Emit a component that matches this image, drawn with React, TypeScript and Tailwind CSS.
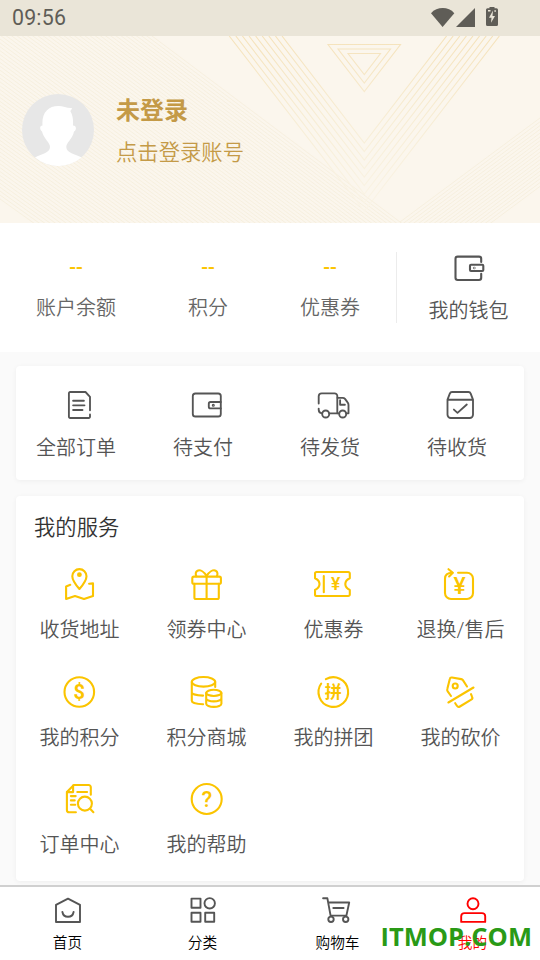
import React from 'react';

const FONT = "font-['Roboto','Noto_Sans_CJK_SC',sans-serif]";

interface IconProps {
  children: React.ReactNode;
  className?: string;
  strokeWidth?: number;
}

/** 40x40 stroked icon, coloured through currentColor */
const Icon: React.FC<IconProps> = ({ children, className = '', strokeWidth = 2.1 }) => (
  <svg
    width="40"
    height="40"
    viewBox="0.5 0 40 40"
    fill="none"
    stroke="currentColor"
    strokeWidth={strokeWidth}
    strokeLinecap="round"
    strokeLinejoin="round"
    className={`block shrink-0 ${className}`}
  >
    {children}
  </svg>
);

interface IconTextProps {
  y: number;
  size: number;
  x?: number;
  weight?: number;
  children: string;
}

/** Character placed inside an icon */
const IconText: React.FC<IconTextProps> = ({ x = 20, y, size, weight = 700, children }) => (
  <text
    x={x}
    y={y}
    fontSize={size}
    fontWeight={weight}
    textAnchor="middle"
    fill="currentColor"
    stroke="none"
  >
    {children}
  </text>
);

interface Entry {
  label: string;
  icon: React.ReactNode;
}

const orders: Entry[] = [
  {
    label: '全部订单',
    icon: (
      <>
        <path d="M30.5 25.3V11.8L26 7H10.6a1.2 1.2 0 0 0-1.2 1.2v23.6a1.2 1.2 0 0 0 1.2 1.2h18.7a1.2 1.2 0 0 0 1.2-1.2v-2.3" />
        <path d="M13.6 15.7h10.8M13.6 20.3h11.4M13.6 25h9.4" />
      </>
    ),
  },
  {
    label: '待支付',
    icon: (
      <>
        <rect x="6.3" y="8.5" width="28" height="23" rx="2.6" />
        <path d="M34.3 17H24a1.7 1.7 0 0 0-1.7 1.7v3A1.7 1.7 0 0 0 24 23.4h10.3" />
        <circle cx="26.8" cy="20.2" r="0.6" />
      </>
    ),
  },
  {
    label: '待发货',
    icon: (
      <>
        <path d="M5.2 18.5v-7.2a3 3 0 0 1 3-3h12.9a2.7 2.7 0 0 1 2.7 2.7v17.2" />
        <path d="M5.2 23.6v1.2a3.5 3.5 0 0 0 3.3 3.5M15.8 28.3h9.8" />
        <path d="M24 12.8h5.2a3 3 0 0 1 2.3 1.1l2.6 3.5a4 4 0 0 1 .9 2.6v8.3h-2.2" />
        <path d="M26.6 15.2v4.5h4.8" />
        <circle cx="12.2" cy="29" r="3.5" />
        <circle cx="29.2" cy="29" r="3.5" />
      </>
    ),
  },
  {
    label: '待收货',
    icon: (
      <>
        <path d="M7 14.7 9.3 8.6A2.4 2.4 0 0 1 11.6 7h16.3a2.4 2.4 0 0 1 2.3 1.6l2.3 6.1v15a3.3 3.3 0 0 1-3.3 3.3h-18.9A3.3 3.3 0 0 1 7 29.7zH32.5" />
        <path d="m13.4 24.6 3.6 3.3 9.3-8.4" />
      </>
    ),
  },
];

const services: Entry[] = [
  {
    label: '收货地址',
    icon: (
      <>
        <path d="M19.9 25C16 20.5 12.8 16.5 12.8 12.2a7.1 7.1 0 0 1 14.2 0C27 16.5 23.8 20.5 19.9 25z" />
        <circle cx="19.9" cy="10.7" r="2.4" fill="currentColor" stroke="none" />
        <path d="m10.8 20.8-4.2 1.7V35l8.9-3 9 3 9-3V19.4l-3.9.3" />
      </>
    ),
  },
  {
    label: '领券中心',
    icon: (
      <>
        <rect x="5.8" y="12.6" width="28.6" height="7.2" rx="1.6" />
        <path d="M7.9 19.8v13.6A1.6 1.6 0 0 0 9.5 35h21.2a1.6 1.6 0 0 0 1.6-1.6V19.8M20.1 12.6V35" />
        <path d="M20.1 12C17.6 8 13.8 5.5 11 6.7c-2.2 1-2 3.8-1.2 5.5M20.1 12c2.5-4 6.3-6.5 9.1-5.3 2.2 1 2 3.8 1.2 5.5" />
      </>
    ),
  },
  {
    label: '优惠券',
    icon: (
      <>
        <path d="M3 8h31.8a1.5 1.5 0 0 1 1.5 1.5v4.7c-3.2 1.4-4.5 3.6-4.5 5.9s1.3 4.5 4.5 5.9v4.5a1.5 1.5 0 0 1-1.5 1.5H3a1.5 1.5 0 0 1-1.5-1.5V26C4.7 24.6 6 22.4 6 20.1s-1.3-4.5-4.5-5.9V9.5A1.5 1.5 0 0 1 3 8z" />
        <path d="M10.300 12v16.300" />
        <IconText x={22.2} y={26} size={17.5} weight={600}>¥</IconText>
      </>
    ),
  },
  {
    label: '退换/售后',
    icon: (
      <>
        <path d="M17.600 8.700h8.900a6 6 0 0 1 6 6V29a6 6 0 0 1-6 6h-16a6 6 0 0 1-6-6V14.700c0-3.600 2.700-6 7.500-6" />
        <path d="m8 5.200 4.300 3.600-3.700 3.700" />
        <IconText x={19.2} y={29.8} size={23} weight={500}>¥</IconText>
      </>
    ),
  },
  {
    label: '我的积分',
    icon: (
      <>
        <circle cx="19.800" cy="20" r="14.800" />
        <IconText x={19.8} y={27} size={20}>$</IconText>
      </>
    ),
  },
  {
    label: '积分商城',
    icon: (
      <>
        <ellipse cx="17" cy="9.800" rx="11.700" ry="4.800" />
        <path d="M5.300 10v18.800c0 1.800 4.700 3.300 11.300 3.400M5.300 20.200c0 1.800 4.700 3.300 11.300 3.400M28.700 10v5" />
        <ellipse cx="27.300" cy="20.900" rx="7.600" ry="3.100" />
        <path d="M19.700 21v10.700c0 1.800 3.400 3.200 7.600 3.200s7.600-1.400 7.600-3.200V21M19.700 26.200c0 1.800 3.400 3.200 7.600 3.200s7.600-1.400 7.600-3.200" />
      </>
    ),
  },
  {
    label: '我的拼团',
    icon: (
      <>
        <path d="M12.400 7.200a14.800 14.800 0 1 1-4.700 4.300" />
        <IconText x={19.8} y={26.4} size={17}>拼</IconText>
      </>
    ),
  },
  {
    label: '我的砍价',
    icon: (
      <>
        <path d="m10.500 24-3.300-4.700a2.500 2.500 0 0 1-.4-2.200L9.300 7a1.900 1.900 0 0 1 2.200-1.500l9.200 1.600a2.500 2.500 0 0 1 1.700 1.100l4.100 6.300" />
        <circle cx="14.700" cy="14" r="2.500" />
        <path d="M33 15.500 7.900 30.500" />
        <path d="m14.700 31.200 1.700 2.600a2.200 2.200 0 0 0 3 .7l11.300-6.800a2.200 2.200 0 0 0 .8-3l-1-2.500" />
      </>
    ),
  },
  {
    label: '订单中心',
    icon: (
      <>
        <path d="M31.300 15.800V8.200A2.200 2.200 0 0 0 29.100 6H14.300L7.400 13v18a2.300 2.300 0 0 0 2.300 2.300h6.700" />
        <path d="M13.600 6.600v6.500H7.600M17.800 13h9.800M11.400 17.100h4.800M11.400 21.400h3.800M11.400 25.700h4.400" />
        <circle cx="25.400" cy="24.600" r="7" />
        <path d="m30.600 29.800 3.300 3.400" />
      </>
    ),
  },
  {
    label: '我的帮助',
    icon: (
      <>
        <circle cx="20.200" cy="20" r="15" />
        <IconText x={20.4} y={27.8} size={22} weight={500}>?</IconText>
      </>
    ),
  },
];

const tabs: Entry[] = [
  {
    label: '首页',
    icon: (
      <>
        <path d="M8.500 14.900 20.500 8.600l12 6.300V32h-24z" />
        <path d="M14.900 22c.5 2.900 2.800 4.800 5.600 4.800s5.100-1.900 5.600-4.800" />
      </>
    ),
  },
  {
    label: '分类',
    icon: (
      <>
        <rect x="9" y="8.600" width="9" height="9.200" />
        <circle cx="27.200" cy="13.300" r="5.200" />
        <rect x="9" y="22.800" width="9" height="9" />
        <rect x="22.700" y="22.800" width="9" height="9" />
      </>
    ),
  },
  {
    label: '购物车',
    icon: (
      <>
        <path d="M5.600 8.300h4.300l3.200 17.300h15.800l2.800-13.100h-21M15.800 18h10.300" />
        <circle cx="13.500" cy="29.300" r="2.700" />
        <circle cx="28.200" cy="29.300" r="2.700" />
      </>
    ),
  },
  {
    label: '我的',
    icon: (
      <>
        <circle cx="20.500" cy="13.700" r="5.500" />
        <path d="M8.700 31.900v-5.600a3.200 3.200 0 0 1 3.200-3.200h17.600a3.200 3.200 0 0 1 3.200 3.200v5.600z" />
      </>
    ),
  },
];

const stats = ['账户余额', '积分', '优惠券'];

const StatusBar = () => (
  <div className="flex h-9 items-center bg-[#eae5d8] pl-3 pr-[40px] text-[#5f5d57]">
    <span className="text-[21.33px] font-normal leading-9 tracking-[0.2px]">09:56</span>
    <svg className="ml-auto" width="70" height="36" viewBox="430 0 70 36" fill="currentColor">
      <path d="M431 13.200C437 6.400 448.500 6.400 454.300 13.200L442.600 27z" />
      <path d="M475 8v19h-19z" />
      <path d="M489.500 7h5v1.200h2a1.500 1.500 0 0 1 1.500 1.500v14.800a1.500 1.500 0 0 1-1.500 1.500h-9a1.500 1.500 0 0 1-1.500-1.500V9.700a1.500 1.500 0 0 1 1.500-1.500h2z" />
      <path d="M493 10.500 489 17.700h2.500l-.5 5 4-6.700h-2.500z" fill="#eae5d8" />
      <path d="M488 10h2.500v1.500H488zM494.500 10h1.200v2h-1.200z" fill="#eae5d8" />
    </svg>
  </div>
);

/** Gold line pattern behind the profile block */
const HeaderPattern = () => (
  <svg className="absolute inset-0" width="540" height="187" viewBox="0 36 540 187" fill="none">
    <defs>
      <linearGradient id="fade" x1="0" y1="36" x2="0" y2="223" gradientUnits="userSpaceOnUse">
        <stop offset="0" stopColor="#f5e2ba" />
        <stop offset="0.450" stopColor="#f7edd5" />
        <stop offset="1" stopColor="#faf5ea" />
      </linearGradient>
    </defs>
    <g stroke="#f5eedb" strokeWidth="0.800">
      {Array.from({ length: 72 }, (_, i) => (
        <path key={i} d={`M0 ${-78 + i * 3.9}L420 ${237 + i * 3.7}`} />
      ))}
      {Array.from({ length: 19 }, (_, i) => (
        <path key={i} d={`M540 ${118 + i * 3.8}l-140 104`} />
      ))}
    </g>
    <g stroke="url(#fade)" strokeWidth="1.100">
      {Array.from({ length: 9 }, (_, i) => (
        <path key={i} d={`M${282 - i * 6.6} 36L364.300 ${143 + i * 8.5}L${446.6 + i * 6.6} 36`} />
      ))}
      <path d="M328 44.500h72.500L364.300 91.500zM338 49h52.500L364.300 83zM348 53.500h32.500L364.300 74.500z" />
    </g>
  </svg>
);

const Avatar = () => (
  <svg width="72" height="72" viewBox="0 0 72 72" className="block">
    <circle cx="36" cy="36" r="36" fill="#e7e7e7" />
    <path
      d="M13 63.500C19 60 28 59 28 53c0-4.500-6-8-8-15.500-2.200-1-2.800-6 .5-6C19.500 19 26 12 36.500 12c5 0 9 2.600 13.500 2-.3 1.300-.8 2.300-1.700 3 2.700 4.500 3 9.500 2.700 14.500 4 0 3.400 5 1 6C50.500 45 44.300 48.500 44.300 53c0 6 9 7 15.200 10.500A36 36 0 0 1 13 63.500z"
      fill="#fff"
    />
  </svg>
);

const ProfileHeader = () => (
  <header className="relative h-[187px] overflow-hidden bg-[#fbf6ed]">
    <HeaderPattern />
    <div className="relative flex pl-[22px] pt-[58px]">
      <Avatar />
      <div className="ml-[22px] text-[#c49a47]">
        <div className="mt-[1px] text-2xl font-bold leading-[32px]">未登录</div>
        <div className="mt-[12px] text-[21.33px] leading-[28px]">点击登录账号</div>
      </div>
    </div>
  </header>
);

const StatsRow = () => (
  <section className="flex h-[129px] bg-white text-xl leading-7">
    <div className="flex w-[396px] justify-around pt-[29px] text-[#666]">
      {stats.map((label) => (
        <div key={label} className="text-center">
          <div className="h-[42px] font-medium leading-[30px] text-[#fbc400]">--</div>
          <div>{label}</div>
        </div>
      ))}
    </div>
    <div className="mt-[29px] h-[71px] w-px bg-[#ececec]" />
    <div className="flex flex-1 flex-col items-center pt-[25px] text-[#555]">
      <Icon>
        <path d="M32.700 14V10.800a2.200 2.200 0 0 0-2.200-2.200H9.200A2.200 2.200 0 0 0 7 10.800v19a2.200 2.200 0 0 0 2.200 2.200h21.300a2.200 2.200 0 0 0 2.200-2.200V25.800" />
        <rect x="21.500" y="16.800" width="13.300" height="6.200" rx="1" />
        <circle cx="25.700" cy="20" r="0.300" />
      </Icon>
      <div className="mt-[9px]">我的钱包</div>
    </div>
  </section>
);

const OrdersCard = () => (
  <section className="mx-4 mt-[14px] grid h-[114px] grid-cols-4 rounded-[4px] bg-white pt-[19px] text-xl leading-7 text-[#555] shadow-[0_1px_5px_rgba(0,0,0,0.05)]">
    {orders.map(({ label, icon }) => (
      <div key={label} className="flex flex-col items-center">
        <Icon strokeWidth={1.85}>{icon}</Icon>
        <div className="mt-[9px] pr-[7px]">{label}</div>
      </div>
    ))}
  </section>
);

const ServicesCard = () => (
  <section className="mx-4 mt-4 h-[385px] rounded-[4px] bg-white pt-[18px] shadow-[0_1px_5px_rgba(0,0,0,0.05)]">
    <h2 className="pl-[18px] text-[21.33px] leading-[28px] text-[#333]">我的服务</h2>
    <div className="mt-[22px] grid auto-rows-[107.5px] grid-cols-4 text-xl leading-7 text-[#555]">
      {services.map(({ label, icon }) => (
        <div key={label} className="flex flex-col items-center">
          <Icon className="text-[#fbc400]">{icon}</Icon>
          <div className="mt-[12px]">{label}</div>
        </div>
      ))}
    </div>
  </section>
);

const TabBar = () => (
  <nav className="relative mt-1 grid h-[75px] grid-cols-4 border-t-2 border-[#d0d0d0] bg-white pt-[3px] text-[14.67px] leading-5 text-black">
    {tabs.map(({ label, icon }) => {
      const active = label === '我的';
      return (
        <div key={label} className={`flex flex-col items-center ${active ? 'text-[#f00]' : ''}`}>
          <Icon strokeWidth={1.9} className={active ? '' : 'text-[#555]'}>
            {icon}
          </Icon>
          <div className="mt-[3px]">{label}</div>
        </div>
      );
    })}
    <div className="absolute left-[380.5px] top-[32px] whitespace-nowrap font-['Open_Sans',sans-serif] text-[25.5px] font-bold leading-[34px] text-[#2a9a16]">
      ITMOP.COM
    </div>
  </nav>
);

export default function App() {
  return (
    <div className={`h-[960px] w-[540px] overflow-hidden bg-[#fafafa] font-[350] ${FONT}`}>
      <StatusBar />
      <ProfileHeader />
      <StatsRow />
      <OrdersCard />
      <ServicesCard />
      <TabBar />
    </div>
  );
}
